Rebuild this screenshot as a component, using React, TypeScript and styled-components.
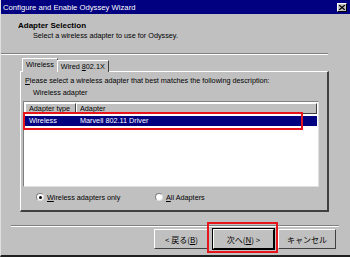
import React from "react";
import styled, { createGlobalStyle } from "styled-components";

const GlobalStyle = createGlobalStyle`
  html, body {
    margin: 0;
    padding: 0;
    background: #c0c0c0;
  }
  body {
    font-family: "Liberation Sans", "Noto Sans CJK JP", sans-serif;
    font-size: 7.25px;
    color: #000;
  }
`;

const Window = styled.div`
  position: relative;
  width: 350px;
  height: 257px;
  box-sizing: border-box;
  background: #c0c0c0;
  border-left: 1px solid #dfdfdf;
  border-bottom: 2px solid #202020;
  display: flex;
  flex-direction: column;
  overflow: hidden;
`;

const TitleBar = styled.div`
  height: 14px;
  flex-shrink: 0;
  background: #000080;
  color: #fff;
  font-size: 7.7px;
  display: flex;
  align-items: center;
  justify-content: space-between;
  padding: 0 3px 0 2px;
`;

const CloseBtn = styled.div`
  width: 10px;
  height: 9px;
  box-sizing: border-box;
  background: #c0c0c0;
  border-top: 1px solid #fff;
  border-left: 1px solid #fff;
  border-right: 1px solid #000;
  border-bottom: 1px solid #000;
  display: flex;
  align-items: center;
  justify-content: center;
`;

const Header = styled.div`
  padding: 7px 0 0 17px;
  height: 32px;
  flex-shrink: 0;
`;

const HeaderTitle = styled.div`
  font-weight: bold;
  font-size: 8px;
  line-height: 10px;
`;

const HeaderSub = styled.div`
  padding-left: 15px;
  line-height: 10px;
`;

const Rule = styled.div<{ $left: number; $width: number }>`
  margin-left: ${(p) => p.$left}px;
  width: ${(p) => p.$width}px;
  height: 0;
  border-top: 1px solid #808080;
  border-bottom: 1px solid #fff;
  flex-shrink: 0;
`;

const TabArea = styled.div`
  margin: 3px 0 0 19px;
  width: 309px;
  display: flex;
  flex-direction: column;
`;

const TabStrip = styled.div`
  display: flex;
  height: 13px;
  padding-left: 2px;
  position: relative;
  z-index: 1;
`;

const Tab = styled.div<{ $active?: boolean }>`
  box-sizing: border-box;
  height: ${(p) => (p.$active ? 14 : 12)}px;
  margin-top: ${(p) => (p.$active ? 0 : 2)}px;
  padding: 0 3px;
  line-height: 11px;
  background: #c0c0c0;
  border-top: 1px solid #fff;
  border-left: 1px solid #fff;
  border-right: 1px solid #404040;
  ${(p) => (p.$active ? "margin-right: -1px;" : "")}
`;

const Panel = styled.div`
  box-sizing: border-box;
  height: 141px;
  border-top: 1px solid #fff;
  border-left: 1px solid #fff;
  border-right: 2px solid #404040;
  border-bottom: 2px solid #404040;
  padding: 3px 8px 0 2px;
  display: flex;
  flex-direction: column;
`;

const Line = styled.div<{ $indent?: number }>`
  line-height: 12px;
  padding-left: ${(p) => p.$indent ?? 2}px;
`;

const U = styled.span`
  text-decoration: underline;
`;

const ListView = styled.div`
  box-sizing: border-box;
  margin-top: 2px;
  height: 86px;
  background: #fff;
  border-top: 1px solid #808080;
  border-left: 1px solid #808080;
  border-right: 1px solid #dfdfdf;
  border-bottom: 1px solid #dfdfdf;
  padding: 1px;
`;

const HeaderRow = styled.div`
  display: flex;
  height: 11px;
`;

const HeaderCell = styled.div<{ $width?: number }>`
  box-sizing: border-box;
  ${(p) => (p.$width ? `width: ${p.$width}px;` : "flex: 1;")}
  background: #c0c0c0;
  border-top: 1px solid #fff;
  border-left: 1px solid #fff;
  border-right: 1px solid #404040;
  border-bottom: 1px solid #404040;
  padding-left: 3px;
  line-height: 9px;
`;

const Row = styled.div<{ $selected?: boolean }>`
  display: flex;
  margin-top: 2px;
  height: 10px;
  line-height: 10px;
  background: ${(p) => (p.$selected ? "#000080" : "transparent")};
  color: ${(p) => (p.$selected ? "#fff" : "#000")};
`;

const Cell = styled.div<{ $width?: number }>`
  ${(p) => (p.$width ? `width: ${p.$width}px;` : "flex: 1;")}
  padding-left: 4px;
  box-sizing: border-box;
`;

const RadioRow = styled.div`
  display: flex;
  align-items: center;
  margin-top: 5px;
  padding-left: 13px;
  height: 10px;
`;

const RadioItem = styled.label<{ $width?: number }>`
  display: flex;
  align-items: center;
  gap: 3px;
  ${(p) => (p.$width ? `width: ${p.$width}px;` : "")}
`;

const RadioDot = styled.span<{ $checked?: boolean }>`
  width: 8px;
  height: 8px;
  box-sizing: border-box;
  border-radius: 50%;
  background: #fff;
  border: 1px solid #808080;
  border-right-color: #dfdfdf;
  border-bottom-color: #dfdfdf;
  display: flex;
  align-items: center;
  justify-content: center;
  &::after {
    content: "";
    width: 3px;
    height: 3px;
    border-radius: 50%;
    background: ${(p) => (p.$checked ? "#000" : "transparent")};
  }
`;

const Footer = styled.div`
  margin-top: 13px;
  display: flex;
  flex-direction: column;
`;

const ButtonRow = styled.div`
  display: flex;
  justify-content: flex-end;
  gap: 4px;
  padding-right: 14px;
  margin-top: 2px;
`;

const Button = styled.div<{ $width: number; $default?: boolean }>`
  box-sizing: border-box;
  width: ${(p) => p.$width}px;
  height: 20px;
  display: flex;
  align-items: center;
  justify-content: center;
  font-family: "Noto Sans CJK JP", "Liberation Sans", sans-serif;
  font-size: 8px;
  background: #c0c0c0;
  border-top: 1px solid #fff;
  border-left: 1px solid #fff;
  border-right: 1px solid #404040;
  border-bottom: 1px solid #404040;
  ${(p) =>
    p.$default
      ? "outline: 1px solid #000; outline-offset: 0; border-right-color: #000; border-bottom-color: #000;"
      : ""}
`;

const Highlight = styled.div<{ $x: number; $y: number; $w: number; $h: number }>`
  position: absolute;
  left: ${(p) => p.$x}px;
  top: ${(p) => p.$y}px;
  width: ${(p) => p.$w}px;
  height: ${(p) => p.$h}px;
  box-sizing: border-box;
  border: 2px solid #e8141b;
  pointer-events: none;
`;

export default function App() {
  return (
    <>
      <GlobalStyle />
      <Window>
        <TitleBar>
          <span>Configure and Enable Odyssey Wizard</span>
          <CloseBtn>
            <svg width="6" height="5" viewBox="0 0 6 5">
              <path d="M0 0 L6 5 M6 0 L0 5" stroke="#000" strokeWidth="1.3" />
            </svg>
          </CloseBtn>
        </TitleBar>
        <Header>
          <HeaderTitle>Adapter Selection</HeaderTitle>
          <HeaderSub>Select a wireless adapter to use for Odyssey.</HeaderSub>
        </Header>
        <Rule $left={0} $width={327} />
        <TabArea>
          <TabStrip>
            <Tab $active>Wireless</Tab>
            <Tab>
              Wired <U>8</U>02.1X
            </Tab>
          </TabStrip>
          <Panel>
            <Line>
              <U>P</U>lease select a wireless adapter that best matches the
              following description:
            </Line>
            <Line $indent={10}>Wireless adapter</Line>
            <ListView>
              <HeaderRow>
                <HeaderCell $width={51}>Adapter type</HeaderCell>
                <HeaderCell>Adapter</HeaderCell>
              </HeaderRow>
              <Row $selected>
                <Cell $width={51}>Wireless</Cell>
                <Cell>Marvell 802.11 Driver</Cell>
              </Row>
            </ListView>
            <RadioRow>
              <RadioItem $width={119}>
                <RadioDot $checked />
                <span>
                  <U>W</U>ireless adapters only
                </span>
              </RadioItem>
              <RadioItem>
                <RadioDot />
                <span>
                  <U>A</U>ll Adapters
                </span>
              </RadioItem>
            </RadioRow>
          </Panel>
        </TabArea>
        <Footer>
          <Rule $left={10} $width={328} />
          <ButtonRow>
            <Button $width={55}>
              &lt; 戻る(<U>B</U>)
            </Button>
            <Button $width={61} $default>
              次へ(<U>N</U>) &gt;
            </Button>
            <Button $width={58}>キャンセル</Button>
          </ButtonRow>
        </Footer>
        <Highlight $x={22} $y={112} $w={280} $h={18} />
        <Highlight $x={206} $y={222} $w={71} $h={31} />
      </Window>
    </>
  );
}
